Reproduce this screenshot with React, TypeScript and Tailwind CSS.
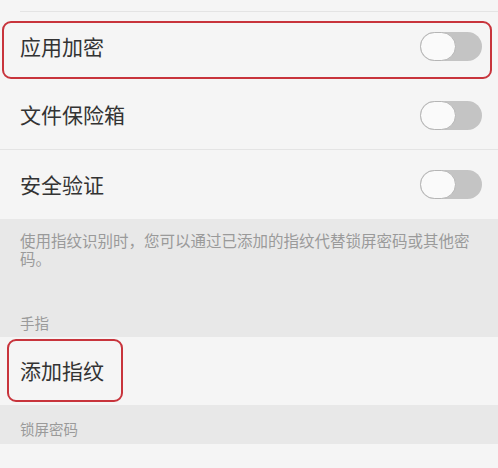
const font = { fontFamily: '"Noto Sans CJK SC", "Noto Sans", sans-serif' };

const Toggle = () => (
  <div className="relative w-[62px] h-[29px] rounded-full bg-[#c4c4c4]">
    <div className="absolute left-0 top-0 w-[36px] h-[29px] rounded-full bg-[#fafafa] border border-[#b5b5b5]" />
  </div>
);

const ToggleRow = ({ label, marked, divider }: { label: string; marked?: boolean; divider?: boolean }) => (
  <div className={`relative h-[69px] flex items-center justify-between pl-[20px] pr-[16px] ${divider ? "border-b border-[#e4e4e4]" : ""}`}>
    <span className="text-[21px] text-[#333333]">{label}</span>
    <Toggle />
    {marked && (
      <div className="absolute left-[2px] right-[6px] top-[9px] bottom-[2px] rounded-[9px] border-2 border-[#c8343c]" />
    )}
  </div>
);

export default function App() {
  return (
    <div className="w-[498px] h-[468px] overflow-hidden bg-[#f5f5f5]" style={font}>
      <div className="h-[12px] border-b border-[#e4e4e4] ml-[20px]" />
      <ToggleRow label="应用加密" marked />
      <ToggleRow label="文件保险箱" divider />
      <ToggleRow label="安全验证" />

      <div className="bg-[#e8e8e8]">
        <p className="pt-[12px] pb-[47px] pl-[20px] pr-[22px] text-[15.5px] leading-[18px] text-[#9a9a9a]">
          使用指纹识别时，您可以通过已添加的指纹代替锁屏密码或其他密码。
        </p>
        <div className="pl-[20px] pb-[5px] text-[14.5px] leading-[18px] text-[#9a9a9a]">手指</div>
      </div>

      <div className="relative h-[68px] flex items-center pl-[20px]">
        <span className="text-[21px] text-[#333333]">添加指纹</span>
        <div className="absolute left-[7px] top-[2px] w-[116px] bottom-[3px] rounded-[9px] border-2 border-[#c8343c]" />
      </div>

      <div className="bg-[#e8e8e8] pt-[15px] pb-[6px] pl-[20px] text-[14.5px] leading-[18px] text-[#9a9a9a]">
        锁屏密码
      </div>
      <div className="h-[40px]" />
    </div>
  );
}
